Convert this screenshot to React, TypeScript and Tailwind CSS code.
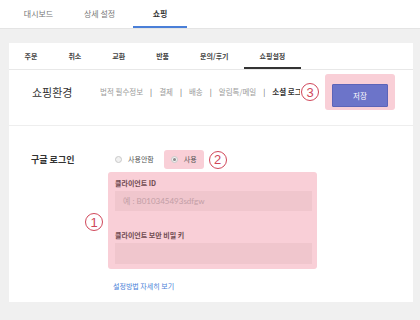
import React from "react";

const font = "font-['Noto_Sans_CJK_KR','Noto_Sans',sans-serif]";

const topTabs = [
  { label: "대시보드", className: "w-[59px]" },
  { label: "상세 설정", className: "w-[63px]" },
  { label: "쇼핑", className: "w-[54px] ml-[2px]", active: true },
];

const shopTabs = ["주문", "취소", "교환", "반품", "문의/후기", "쇼핑설정"];

const links = ["법적 필수정보", "결제", "배송", "알림톡/메일"];

const Marker: React.FC<{ n: number; className?: string }> = ({ n, className = "" }) => (
  <div
    className={`w-[18px] h-[18px] shrink-0 rounded-full border border-[#d0475a] bg-white text-[#d0475a] flex items-center justify-center text-[13px] leading-none font-['Liberation_Sans',sans-serif] ${className}`}
  >
    {n}
  </div>
);

const Radio: React.FC<{ checked?: boolean }> = ({ checked }) => (
  <span className="w-[7px] h-[7px] shrink-0 rounded-full border border-[#c9c9c9] bg-[#f1f1f1] flex items-center justify-center">
    {checked && <span className="w-[3px] h-[3px] rounded-full bg-[#8a8a8a]" />}
  </span>
);

export default function App() {
  return (
    <div className={`w-[420px] h-[320px] bg-[#f0f0f0] overflow-hidden ${font}`}>
      {/* top nav */}
      <div className="h-[29px] bg-white border-b border-[#e4e4e4] flex pl-[9px]">
        {topTabs.map((t) => (
          <div
            key={t.label}
            className={`${t.className} h-[28px] flex items-center justify-center text-[8px] ${
              t.active ? "border-b-2 border-[#4a7fd8] text-[#333] font-semibold pt-[2px]" : "text-[#777]"
            }`}
          >
            {t.label}
          </div>
        ))}
      </div>

      <div className="ml-[9px] mt-[14px] w-[404px] h-[259px] bg-white flex flex-col">
        {/* shopping tabs */}
        <div className="h-[27px] flex border-b border-[#e8e8e8]">
          {shopTabs.map((t, i) => (
            <div
              key={t}
              className={`h-[26px] px-[15.5px] flex items-center text-[7px] font-semibold text-[#444] ${
                i === 5 ? "border-b-2 border-[#333] pt-[2px]" : ""
              }`}
            >
              {t}
            </div>
          ))}
        </div>

        {/* header */}
        <div className="h-[56px] border-b border-[#eeeeee] flex items-center pl-[23px] pr-[18px] pb-[11px]">
          <div className="w-[68px] shrink-0 text-[11px] text-[#333] whitespace-nowrap">쇼핑환경</div>
          <div className="flex-1 min-w-0 overflow-hidden flex items-center whitespace-nowrap text-[7.5px] text-[#9a9a9a]">
            {links.map((l) => (
              <React.Fragment key={l}>
                <span>{l}</span>
                <span className="mx-[7px] text-[#555]">|</span>
              </React.Fragment>
            ))}
            <span className="text-[#333] font-semibold">소셜 로그인</span>
          </div>
          <Marker n={3} className="ml-[1px]" />
          <div className="ml-[6px] w-[70px] h-[36px] bg-[#f9cfd7] rounded-[3px] pt-[6px] pb-[7px] px-[7px]">
            <button className="w-full h-full bg-[#6c74c9] border border-[#5c64b8] rounded-[1px] text-white text-[7.5px]">
              저장
            </button>
          </div>
        </div>

        {/* form */}
        <div className="flex pt-[24px] pl-[22px]">
          <div className="w-[77px] flex flex-col">
            <div className="h-[19px] flex items-center text-[9px] font-bold text-[#333]">구글 로그인</div>
            <Marker n={1} className="self-end mr-[5px] mt-[44px]" />
          </div>

          <div className="flex flex-col">
            <div className="h-[19px] flex items-center pl-[7px] text-[7px] text-[#555]">
              <Radio />
              <span className="ml-[6px]">사용안함</span>
              <div className="ml-[10px] h-[19px] bg-[#f9cfd7] rounded-[3px] flex items-center pl-[7px] pr-[7px]">
                <Radio checked />
                <span className="ml-[6px]">사용</span>
              </div>
              <Marker n={2} className="ml-[5px] w-[17px] h-[17px]" />
            </div>

            <div className="mt-[3px] w-[209px] h-[97px] bg-[#f9cfd7] rounded-[3px] pt-[3px] pl-[7px] pr-[5px] flex flex-col">
              <div className="h-[16px] flex items-center text-[7px] font-bold text-[#6e4a50]">클라이언트 ID</div>
              <div className="h-[20px] bg-[#f0c6cd] flex items-center pl-[8px] text-[8px] text-[#c29ea6] font-['Lato','Noto_Sans_CJK_KR',sans-serif]">
                예 : B010345493sdfgw
              </div>
              <div className="mt-[16px] h-[16px] flex items-center text-[7px] font-bold text-[#6e4a50]">
                클라이언트 보안 비밀 키
              </div>
              <div className="h-[21px] bg-[#f0c6cd]" />
            </div>

            <div className="mt-[11px] pl-[5px] h-[12px] flex items-center text-[7px] text-[#4a7fd8]">
              설정방법 자세히 보기
            </div>
          </div>
        </div>
      </div>
    </div>
  );
}
